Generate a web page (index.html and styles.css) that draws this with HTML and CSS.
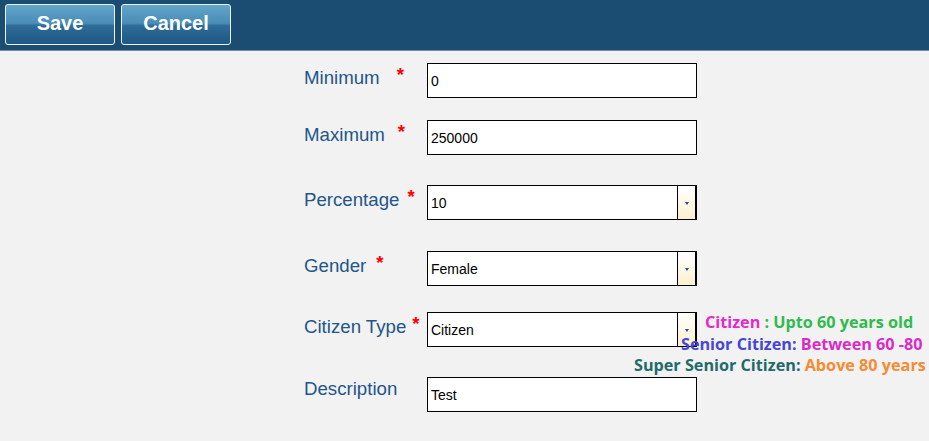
FILE: index.html
```html
<!DOCTYPE html>
<html lang="en">
<head>
<meta charset="utf-8">
<title>Tax Slab</title>
<link rel="stylesheet" href="styles.css">
</head>
<body>
<header class="toolbar">
  <button class="tb-btn" type="button">Save</button>
  <button class="tb-btn" type="button">Cancel</button>
</header>
<main class="form">
  <div class="row">
    <label class="lbl">Minimum<span class="star s-min">*</span></label>
    <div class="field"><span class="val">0</span></div>
  </div>
  <div class="row row-max">
    <label class="lbl">Maximum<span class="star s-max">*</span></label>
    <div class="field"><span class="val">250000</span></div>
  </div>
  <div class="row row-pct">
    <label class="lbl">Percentage<span class="star s-pct">*</span></label>
    <div class="field select"><span class="val">10</span><span class="arrow-box"><span class="arrow"></span></span></div>
  </div>
  <div class="row row-gen">
    <label class="lbl">Gender<span class="star s-gen">*</span></label>
    <div class="field select"><span class="val">Female</span><span class="arrow-box"><span class="arrow"></span></span></div>
  </div>
  <div class="row row-cit">
    <label class="lbl">Citizen Type<span class="star s-cit">*</span></label>
    <div class="field select"><span class="val">Citizen</span><span class="arrow-box"><span class="arrow"></span></span></div>
    <div class="legend">
      <div class="lg lg1"><span class="c-pink">Citizen </span><span class="c-green">: Upto 60 years old</span></div>
      <div class="lg lg2"><span class="c-blue">Senior Citizen: </span><span class="c-magenta">Between 60 -80</span></div>
      <div class="lg lg3"><span class="c-teal">Super Senior Citizen: </span><span class="c-orange">Above 80 years</span></div>
    </div>
  </div>
  <div class="row row-desc">
    <label class="lbl">Description</label>
    <div class="field"><span class="val">Test</span></div>
  </div>
</main>
</body>
</html>
```
FILE: styles.css
```css
* { box-sizing: border-box; }

body {
  margin: 0;
  background: #f2f2f2;
  font-family: "Liberation Sans", Arial, sans-serif;
}

.toolbar {
  height: 51px;
  background: #1b4d73;
  border-bottom: 1px solid #6a8db2;
  display: flex;
  align-items: flex-start;
  gap: 6px;
  padding: 4px 5px 0;
}

.tb-btn {
  width: 110px;
  height: 41px;
  border: 1px solid #eef3f7;
  border-radius: 3px;
  background: linear-gradient(to bottom, #60a5c9 0%, #4a8db6 47%, #2e6b96 53%, #1e5884 100%);
  color: #ffffff;
  font-family: "Liberation Sans", Arial, sans-serif;
  font-weight: bold;
  font-size: 20px;
  padding: 0 0 3px;
  cursor: pointer;
}

.form {
  margin-left: 304px;
  padding-top: 12px;
  width: 393px;
}

.row {
  position: relative;
  display: grid;
  grid-template-columns: 123px 270px;
}

.row-max { margin-top: 22px; }
.row-pct { margin-top: 30px; }
.row-gen { margin-top: 31px; }
.row-cit { margin-top: 26px; }
.row-desc { margin-top: 30px; }

.lbl {
  font-size: 18.67px;
  line-height: 21px;
  padding-top: 1px;
  color: #22568a;
  white-space: nowrap;
}

.star {
  color: #ff0000;
  font-weight: bold;
  vertical-align: 3px;
}
.s-min { margin-left: 17px; }
.s-max { margin-left: 13px; }
.s-pct { margin-left: 8px; }
.s-gen { margin-left: 10px; }
.s-cit { margin-left: 6px; }

.field {
  height: 35px;
  border: 1px solid #000000;
  background: #ffffff;
  display: flex;
  align-items: center;
  padding-left: 3px;
  font-size: 14px;
  color: #000000;
}

.field .val { flex: 1; }

.select {
  border-right-width: 2px;
  padding-right: 0;
}

.arrow-box {
  width: 18px;
  align-self: stretch;
  border-left: 1px solid #000000;
  background: linear-gradient(to bottom, #ffffff 0%, #fdf6e2 60%, #fcefcc 100%);
  display: flex;
  align-items: center;
  justify-content: center;
}

.arrow {
  width: 0;
  height: 0;
  border-left: 2.5px solid transparent;
  border-right: 2.5px solid transparent;
  border-top: 3px solid #244c98;
  margin-top: 1px;
}

.legend {
  position: absolute;
  left: 330px;
  top: 0;
  font-family: "Open Sans", "Noto Sans", sans-serif;
  font-weight: 700;
  font-size: 16.2px;
  line-height: 21.5px;
  white-space: nowrap;
}

.lg1 { padding-left: 71px; }
.lg2 { padding-left: 47px; }
.lg3 { padding-left: 0; }

.c-pink { color: #e32bc9; }
.c-green { color: #2fbb4d; }
.c-blue { color: #4646d6; }
.c-magenta { color: #d92bc7; }
.c-teal { color: #1e6b6b; }
.c-orange { color: #f68b33; }
```
